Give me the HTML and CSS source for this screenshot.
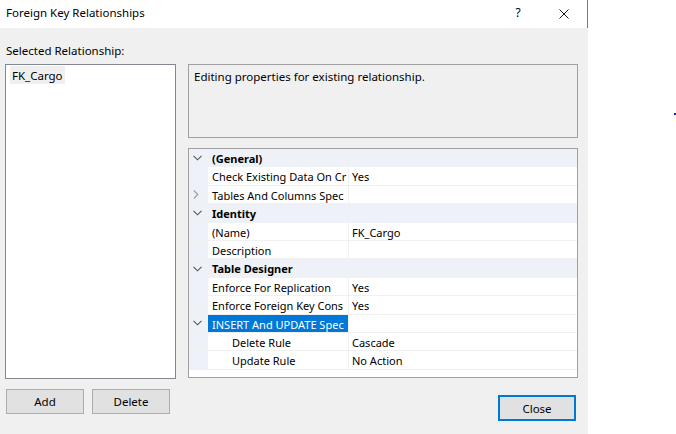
FILE: index.html
```html
<!DOCTYPE html>
<html>
<head>
<meta charset="utf-8">
<link rel="stylesheet" href="styles.css">
</head>
<body>
<div class="screen">
  <div class="dialog">
    <div class="titlebar">
      <span class="title">Foreign Key Relationships</span>
      <span class="tb-btn help">?</span>
      <span class="tb-btn close-x"><svg width="10" height="10" viewBox="0 0 10 10"><path d="M0.5 0.5L9.5 9.5M9.5 0.5L0.5 9.5" stroke="#111" stroke-width="1" fill="none"/></svg></span>
    </div>
    <div class="body">
      <div class="label">Selected Relationship:</div>
      <div class="main">
        <div class="leftcol">
          <div class="listbox"><div class="item">FK_Cargo</div></div>
          <div class="btnrow">
            <button class="btn">Add</button>
            <button class="btn">Delete</button>
          </div>
        </div>
        <div class="rightcol">
          <div class="desc">Editing properties for existing relationship.</div>
          <div class="grid">
            <div class="row cat"><span class="gut"><svg class="chev" width="9" height="6" viewBox="0 0 9 6"><path d="M0.5 0.8L4.5 4.8L8.5 0.8" stroke="#555" stroke-width="1.1" fill="none"/></svg></span><span class="cname">(General)</span></div>
            <div class="row"><span class="gut"></span><span class="name"><span class="clip">Check Existing Data On Cr</span></span><span class="val">Yes</span></div>
            <div class="row"><span class="gut"><svg class="chev" width="6" height="9" viewBox="0 0 6 9"><path d="M0.8 0.5L4.8 4.5L0.8 8.5" stroke="#9a9a9a" stroke-width="1.1" fill="none"/></svg></span><span class="name"><span class="clip">Tables And Columns Spec</span></span><span class="val"></span></div>
            <div class="row cat"><span class="gut"><svg class="chev" width="9" height="6" viewBox="0 0 9 6"><path d="M0.5 0.8L4.5 4.8L8.5 0.8" stroke="#555" stroke-width="1.1" fill="none"/></svg></span><span class="cname">Identity</span></div>
            <div class="row"><span class="gut"></span><span class="name">(Name)</span><span class="val">FK_Cargo</span></div>
            <div class="row"><span class="gut"></span><span class="name">Description</span><span class="val"></span></div>
            <div class="row cat"><span class="gut"><svg class="chev" width="9" height="6" viewBox="0 0 9 6"><path d="M0.5 0.8L4.5 4.8L8.5 0.8" stroke="#555" stroke-width="1.1" fill="none"/></svg></span><span class="cname">Table Designer</span></div>
            <div class="row"><span class="gut"></span><span class="name">Enforce For Replication</span><span class="val">Yes</span></div>
            <div class="row"><span class="gut"></span><span class="name"><span class="clip">Enforce Foreign Key Cons</span></span><span class="val">Yes</span></div>
            <div class="row"><span class="gut"><svg class="chev" width="9" height="6" viewBox="0 0 9 6"><path d="M0.5 0.8L4.5 4.8L8.5 0.8" stroke="#555" stroke-width="1.1" fill="none"/></svg></span><span class="name selected"><span class="clip">INSERT And UPDATE Spec</span></span><span class="val"></span></div>
            <div class="row"><span class="gut"></span><span class="name sub">Delete Rule</span><span class="val">Cascade</span></div>
            <div class="row"><span class="gut"></span><span class="name sub">Update Rule</span><span class="val">No Action</span></div>
          </div>
          <div class="closerow"><button class="btn primary">Close</button></div>
        </div>
      </div>
    </div>
  </div>
  <div class="outside"><span class="dot"></span></div>
</div>
</body>
</html>
```

FILE: styles.css
```css
* { box-sizing: border-box; }
html, body { margin: 0; padding: 0; background: #fff; }
body {
  font-family: "Noto Sans", "Open Sans", "DejaVu Sans", sans-serif;
  font-size: 11px;
  color: #000;
}
.screen { display: flex; width: 676px; height: 434px; overflow: hidden; }
.dialog { width: 588px; height: 434px; display: flex; flex-direction: column; background: #f0f0f0; }
.titlebar {
  height: 28px; width: 588px; background: #fff;
  border-right: 1px solid #7a7a7a;
  display: flex; align-items: center;
}
.title { flex: 1; padding-left: 6px; font-size: 11.5px; line-height: 16px; padding-bottom: 2px; }
.tb-btn { display: flex; align-items: center; justify-content: center; height: 28px; }
.help { width: 46px; font-size: 12px; padding-bottom: 3px; }
.close-x { width: 46px; padding-bottom: 1px; }
.body { flex: 1; display: flex; flex-direction: column; }
.label { margin-top: 15px; height: 16px; line-height: 16px; padding-left: 6px; color: #000; font-size: 11.5px; }
.main { display: flex; gap: 12px; padding-left: 5px; margin-top: 5px; }
.leftcol { width: 171px; display: flex; flex-direction: column; }
.listbox {
  height: 315px; background: #fff; border: 1px solid #828790; padding: 1px 4px;
}
.item { display: inline-block; background: #efefef; height: 18px; line-height: 19px; padding: 0 2px; font-size: 11.5px; }
.btnrow { display: flex; gap: 8px; margin-top: 10px; padding-left: 1px; }
.btn {
  width: 78px; height: 25px; background: #e1e1e1; border: 1px solid #adadad;
  font-family: inherit; font-size: 11.5px; color: #000; padding: 0;
}
.rightcol { width: 390px; display: flex; flex-direction: column; }
.desc {
  height: 74px; border: 1px solid #a0a0a0; background: #f0f0f0;
  padding: 2px 5px; line-height: 19px; font-size: 11.5px;
}
.grid {
  margin-top: 10px; height: 230px; border: 1px solid #a0a0a0; background: #fff;
  display: flex; flex-direction: column;
}
.row { height: 18.4px; display: flex; flex: none; line-height: 19px; border-bottom: 1px solid #f0f0f0; }
.row.cat { background: #eef2f8; border-bottom: none; font-weight: bold; }
.gut { width: 19px; flex: none; background: #eef2f8; display: flex; align-items: center; padding-left: 4px; }
.chev { display: block; }
.name {
  width: 141px; flex: none; white-space: nowrap; overflow: hidden; padding-left: 4px;
  border-right: 1px solid #f0f0f0;
}
.clip { display: block; width: 100%; overflow: hidden; white-space: nowrap; }
.name.sub { padding-left: 24px; }
.name.selected { background: #0078d7; color: #fff; }
.cname { padding-left: 4px; }
.val { flex: 1; padding-left: 3px; white-space: nowrap; }
.closerow { display: flex; justify-content: flex-end; margin-top: 17px; padding-right: 2px; }
.btn.primary { height: 26px; border: 2px solid #0078d7; }
.outside { flex: 1; padding-top: 113px; display: flex; justify-content: flex-end; align-items: flex-start; }
.dot { width: 2px; height: 2px; background: #1a1aff; display: block; }
```
